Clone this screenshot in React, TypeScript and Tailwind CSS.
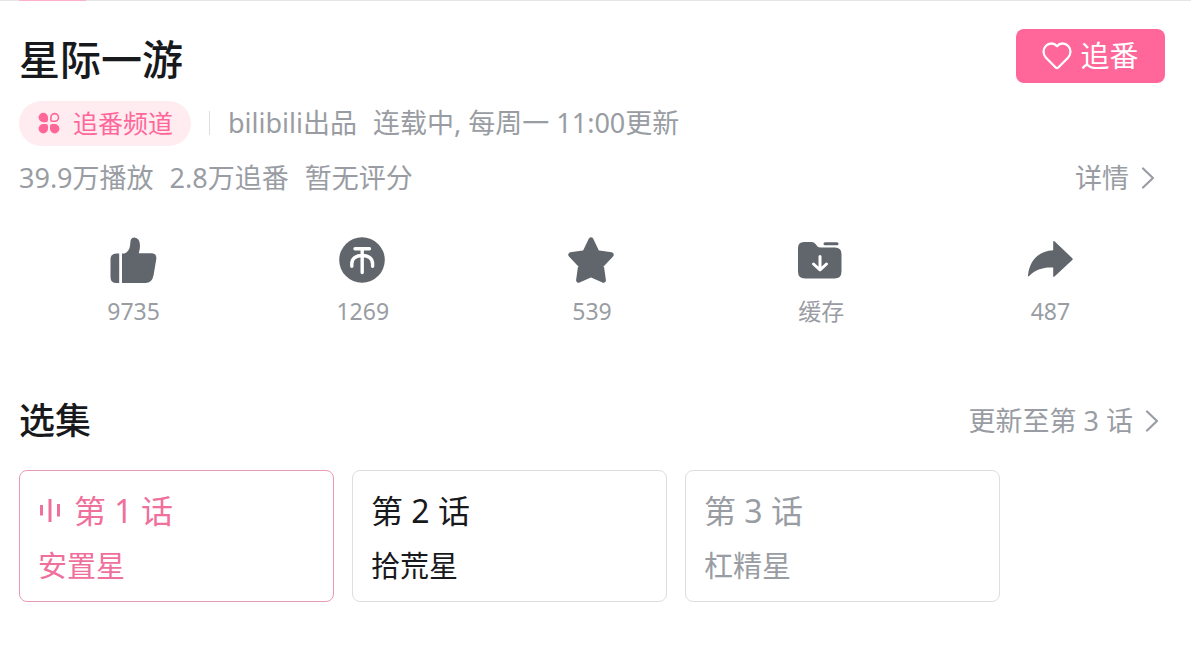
import React, { useState } from "react";

const EPISODES = [
  { id: 1, name: "安置星", locked: false },
  { id: 2, name: "拾荒星", locked: false },
  { id: 3, name: "杠精星", locked: true },
];

const ThumbIcon = () => (
  <svg viewBox="1 0 48 48" className="size-12" fill="currentColor">
    <path d="M7.5 17.5H10.2V47H7.5Q1.5 47 1.5 41V23.5Q1.5 17.5 7.5 17.5Z" />
    <path d="M13 17.5H15.5Q20.5 15.5 21.2 8.5L21.5 5Q22 1.4 25.3 1.4Q31 2 31 9.5Q31 13.5 29.8 17.3H42.5Q48 17.6 47.3 23L44.5 39.5Q43 47 36.5 47H13Z" />
  </svg>
);

const CoinIcon = () => (
  <svg viewBox="1 0 48 48" className="size-12">
    <circle cx="24" cy="24" r="22.8" fill="currentColor" />
    <g fill="none" stroke="#fff" strokeWidth="3.4" strokeLinecap="round">
      <path d="M17 12.7H31.5M24.2 13V36.5M13.8 30.3V28C13.8 22.5 18 19.5 24.2 19.5C30.4 19.5 34.6 22.5 34.6 28V30.3" />
    </g>
  </svg>
);

const StarIcon = () => (
  <svg viewBox="1 0 48 48" className="size-12">
    <path
      d="M24 3.8L30.2 16.8L44.2 18.8L34.3 29.3L36.4 44.2L24 38.8L11.6 44.2L13.7 29.3L3.8 18.8L17.8 16.8Z"
      fill="currentColor"
      stroke="currentColor"
      strokeWidth="5"
      strokeLinejoin="round"
    />
  </svg>
);

const FolderIcon = () => (
  <svg viewBox="1 0 48 48" className="size-12">
    <path
      d="M8 6H15.5Q18 6 19.5 8L21.5 10.5Q22.5 11.5 24.5 11.5H39Q45.5 11.5 45.5 18V35.5Q45.5 42.5 38.5 42.5H9Q2 42.5 2 35.5V12Q2 6 8 6Z"
      fill="currentColor"
    />
    <path
      d="M29 7.8H41"
      stroke="currentColor"
      strokeWidth="3"
      strokeLinecap="round"
    />
    <path
      d="M24 20.5V33.5M17.5 28L24 34L30.5 28"
      fill="none"
      stroke="#fff"
      strokeWidth="3"
      strokeLinecap="round"
      strokeLinejoin="round"
    />
  </svg>
);

const ShareIcon = () => (
  <svg viewBox="0 0 48 48" className="size-12">
    <path
      d="M28.5 5.2L46.3 22.2Q47.2 23.1 46.3 24L28.5 40.6Q27.2 41.4 27.2 39.9V31.5C17.5 31 9 33.5 3.2 40Q1.8 41.2 2 39.3C3.5 24.5 12.5 15 27.2 14.2V5.8Q27.2 4.4 28.5 5.2Z"
      fill="currentColor"
    />
  </svg>
);

const Chevron = () => (
  <svg
    viewBox="0 0 14 24"
    className="w-[14px] h-6"
    fill="none"
    stroke="currentColor"
    strokeWidth="2.2"
    strokeLinecap="round"
    strokeLinejoin="round"
  >
    <path d="M2 2.5L12 12L2 21.5" />
  </svg>
);

const ACTIONS = [
  { label: "9735", icon: <ThumbIcon /> },
  { label: "1269", icon: <CoinIcon /> },
  { label: "539", icon: <StarIcon /> },
  { label: "缓存", icon: <FolderIcon /> },
  { label: "487", icon: <ShareIcon /> },
];

const App = () => {
  const [current, setCurrent] = useState(1);

  return (
    <main className="bg-white border-t border-[#e3e5e7] pl-[19px] pr-[26px] pb-12 font-['Noto_Sans','Noto_Sans_CJK_SC',sans-serif] text-[27px] text-[#999da3]">
      {/* active tab underline */}
      <div className="-mt-px h-px w-[67px] bg-[#ffb0c9]" />

      <header className="pt-7 flex items-start justify-between">
        <h1 className="text-[41px] leading-[60px] font-medium text-[#18191c]">
          星际一游
        </h1>
        <button className="h-[54px] w-[149px] rounded-lg bg-[#ff6699] text-white text-[29px] flex items-center justify-center gap-2">
          <svg
            viewBox="0 0 30 28"
            className="w-[30px] h-7"
            fill="none"
            stroke="currentColor"
            strokeWidth="2.3"
            strokeLinejoin="round"
          >
            <path d="M15 4.2C12 .7 7 .7 4 3.7C.7 7 .8 12.3 4 15.7L13.7 25.5Q15 26.8 16.3 25.5L26 15.7C29.2 12.3 29.3 7 26 3.7C23 .7 18 .7 15 4.2Z" />
          </svg>
          追番
        </button>
      </header>

      <div className="mt-[10px] flex items-center leading-[48px]">
        <a
          href="#channel"
          className="h-[45px] px-[18px] rounded-full bg-[#ffecf1] text-[#ff6699] text-[25px] flex items-center gap-3"
        >
          <svg viewBox="0 0 24 24" className="size-6" fill="currentColor">
            <path d="M6.3 1.8A4.7 4.7 0 0 1 11 6.5V9Q11 11.2 8.8 11.2H6.3A4.7 4.7 0 0 1 6.3 1.8Z" />
            <path d="M6.3 13H8.8Q11 13 11 15.2V17.7A4.7 4.7 0 1 1 6.3 13Z" />
            <path d="M15.2 13H17.7A4.7 4.7 0 1 1 13 17.7V15.2Q13 13 15.2 13Z" />
            <path
              d="M17.7 2.6A3.8 3.8 0 0 1 17.7 10.2H15Q13.9 10.2 13.9 9.1V6.4A3.8 3.8 0 0 1 17.7 2.6Z"
              fill="none"
              stroke="currentColor"
              strokeWidth="1.6"
            />
          </svg>
          追番频道
        </a>
        <span className="mx-[18px] h-6 w-px bg-[#dcdee0]" />
        <span>bilibili出品</span>
        <span className="ml-4">连载中, 每周一 11:00更新</span>
      </div>

      <div className="mt-[11px] flex items-center justify-between leading-10">
        <p className="flex gap-4">
          <span>39.9万播放</span>
          <span>2.8万追番</span>
          <span>暂无评分</span>
        </p>
        <a href="#detail" className="flex items-center gap-3 pr-[10px]">
          详情
          <Chevron />
        </a>
      </div>

      <div className="mt-[38px] grid grid-cols-5">
        {ACTIONS.map((action) => (
          <button
            key={action.label}
            className="flex flex-col items-center gap-[11px] text-[#61666d]"
          >
            {action.icon}
            <span className="text-[23px] leading-8 text-[#999da3]">
              {action.label}
            </span>
          </button>
        ))}
      </div>

      <section>
        <div className="mt-[70px] flex items-center justify-between leading-12">
          <h2 className="text-[36px] font-medium text-[#18191c]">选集</h2>
          <a href="#episodes" className="flex items-center gap-3 pr-[6px]">
            更新至第 3 话
            <Chevron />
          </a>
        </div>

        <div className="mt-[25px] flex gap-[18px]">
          {EPISODES.map((ep) => {
            const active = ep.id === current;
            const color = active
              ? "border-[#e79ab6] text-[#f0709c]"
              : ep.locked
                ? "border-[#dcdee0] text-[#999da3]"
                : "border-[#dcdee0] text-[#18191c]";
            return (
              <button
                key={ep.id}
                onClick={() => setCurrent(ep.id)}
                className={`w-[315px] rounded-lg border px-[18px] pt-4 pb-[11px] text-left ${color}`}
              >
                <span className="flex items-center gap-3 text-[32px] leading-12">
                  {active && (
                    <svg
                      viewBox="0 0 24 24"
                      className="size-6"
                      stroke="currentColor"
                      strokeWidth="3"
                    >
                      <path d="M3.5 6V16.5M12 0V23M20.5 5V17.5" />
                    </svg>
                  )}
                  第 {ep.id} 话
                </span>
                <span className="mt-[7px] block text-[29px] leading-12">
                  {ep.name}
                </span>
              </button>
            );
          })}
        </div>
      </section>
    </main>
  );
};

export default App;
